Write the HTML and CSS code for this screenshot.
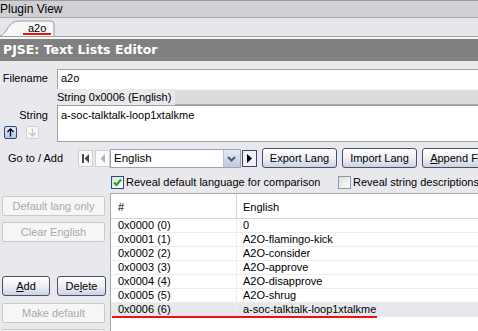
FILE: index.html
```html
<!DOCTYPE html>
<html lang="en">

<head>
    <meta charset="UTF-8">
    <title>Plugin View</title>
    <link rel="stylesheet" href="styles.css">
</head>

<body>
    <div class="window">
        <div class="pane-title">Plugin View</div>

        <div class="tabstrip">
            <div class="tab">
                <svg class="tab-shape" width="56" height="18" viewBox="0 0 56 18">
                    <path d="M0 18 C7 16 8 3 19 3 L51 3 Q54 3 54 6 L54 18" fill="#f8f8f8" stroke="#9a9a9a"/>
                </svg>
                <span class="tab-label">a2o</span>
                <span class="mark mark-tab"></span>
            </div>
        </div>

        <div class="editor-head">PJSE: Text Lists Editor</div>

        <div class="editor">
            <div class="field-row">
                <label class="side-label">Filename</label>
                <div class="textbox filename">a2o</div>
            </div>

            <div class="caption-row">
                <span class="caption">String 0x0006 (English)</span>
                <span class="caption-bar"></span>
            </div>

            <div class="string-row">
                <div class="string-side">
                    <label class="side-label">String</label>
                    <div class="arrows">
                        <span class="arrow-btn">
                            <svg width="11" height="11" viewBox="0 0 11 11"><path d="M5.5 9.5 V2 M2.5 5 L5.5 2 L8.5 5" fill="none" stroke="#000" stroke-width="1.3"/></svg>
                        </span>
                        <span class="arrow-btn disabled">
                            <svg width="11" height="11" viewBox="0 0 11 11"><path d="M5.5 1.5 V9 M2.5 6 L5.5 9 L8.5 6" fill="none" stroke="#c4c4c4" stroke-width="1.3"/></svg>
                        </span>
                    </div>
                </div>
                <div class="textbox string-box">a-soc-talktalk-loop1xtalkme</div>
            </div>

            <div class="goto-row">
                <span class="goto-label">Go to / Add</span>
                <span class="nav-btn">
                    <svg width="13" height="15" viewBox="0 0 13 15"><rect x="3" y="3" width="2" height="9" fill="#4a4a4a"/><path d="M10 3 L5.5 7.5 L10 12 Z" fill="#4a4a4a"/></svg>
                </span>
                <span class="nav-btn prev">
                    <svg width="13" height="15" viewBox="0 0 13 15"><path d="M9 3 L4.5 7.5 L9 12 Z" fill="#b4b4b4"/></svg>
                </span>
                <div class="combo">
                    <span class="combo-text">English</span>
                    <span class="combo-btn">
                        <svg width="15" height="17" viewBox="0 0 15 17"><path d="M4 7 L7.5 10.5 L11 7" fill="none" stroke="#4b5a7c" stroke-width="2"/></svg>
                    </span>
                </div>
                <span class="nav-btn next">
                    <svg width="13" height="15" viewBox="0 0 13 15"><path d="M4 3 L9 7.5 L4 12 Z" fill="#000"/></svg>
                </span>
                <button class="xp-btn lang-btn">Export Lang</button>
                <button class="xp-btn lang-btn">Import Lang</button>
                <button class="xp-btn lang-btn"><u>A</u>ppend File</button>
            </div>

            <div class="check-row">
                <span class="check on">
                    <svg width="11" height="11" viewBox="0 0 11 11"><path d="M2 5.5 L4.5 8 L9 2.5" fill="none" stroke="#21a121" stroke-width="2"/></svg>
                </span>
                <span class="check-text first">Reveal default language for comparison</span>
                <span class="check second"></span>
                <span class="check-text">Reveal string descriptions</span>
            </div>

            <div class="bottom">
                <div class="side-buttons">
                    <button class="xp-btn wide" disabled>Default lang only</button>
                    <button class="xp-btn wide" disabled>Clear English</button>
                    <div class="pair">
                        <button class="xp-btn"><u>A</u>dd</button>
                        <button class="xp-btn">De<u>l</u>ete</button>
                    </div>
                    <button class="xp-btn wide" disabled>Make default</button>
                    <button class="xp-btn wide" disabled>&nbsp;</button>
                </div>

                <div class="listview">
                    <div class="list-row list-head">
                        <span class="col-id">#</span>
                        <span class="col-text">English</span>
                    </div>
                    <div class="list-row"><span class="col-id">0x0000 (0)</span><span class="col-text">0</span></div>
                    <div class="list-row"><span class="col-id">0x0001 (1)</span><span class="col-text">A2O-flamingo-kick</span></div>
                    <div class="list-row"><span class="col-id">0x0002 (2)</span><span class="col-text">A2O-consider</span></div>
                    <div class="list-row"><span class="col-id">0x0003 (3)</span><span class="col-text">A2O-approve</span></div>
                    <div class="list-row"><span class="col-id">0x0004 (4)</span><span class="col-text">A2O-disapprove</span></div>
                    <div class="list-row"><span class="col-id">0x0005 (5)</span><span class="col-text">A2O-shrug</span></div>
                    <div class="list-row selected"><span class="col-id">0x0006 (6)</span><span class="col-text">a-soc-talktalk-loop1xtalkme</span></div>
                    <span class="mark mark-row"></span>
                </div>
            </div>
        </div>
    </div>
</body>

</html>
```

FILE: styles.css
```css
body {
    margin: 0;
    overflow: hidden;
    font-family: 'Liberation Sans', Arial, sans-serif;
    font-size: 11px;
    color: #000;
    background-color: #e9e9ed;
}

.window {
    width: 560px;
}

/* top strips */

.pane-title {
    height: 16px;
    line-height: 16px;
    font-size: 12px;
    background: #d0d0d4;
    border-top: 1px solid #9c9c9c;
    border-bottom: 1px solid #a8a8a8;
}

.tabstrip {
    height: 18px;
    background: #e6e6ea;
    border-bottom: 1px solid #a0a0a0;
}

.tab {
    position: relative;
    width: 56px;
    height: 18px;
}

.tab-shape {
    position: absolute;
    left: 0;
    top: 0;
}

.tab-label {
    position: relative;
    display: block;
    padding: 4px 0 0 28px;
    line-height: 12px;
}

.mark {
    position: absolute;
    height: 2px;
    background: #ee1111;
}

.mark-tab {
    left: 23px;
    top: 15px;
    width: 28px;
}

.editor-head {
    height: 22px;
    line-height: 22px;
    padding-left: 3px;
    border-top: 2px solid #f6f6f6;
    background: #808080;
    color: #fff;
    font-family: 'DejaVu Sans', Verdana, sans-serif;
    font-weight: bold;
    font-size: 12.5px;
}

/* editor form */

.editor {
    padding-top: 8px;
}

.field-row {
    display: flex;
    height: 20px;
}

.side-label {
    display: block;
    width: 48px;
    padding-right: 9px;
    text-align: right;
}

.field-row .side-label {
    line-height: 19px;
}

.textbox {
    flex: 1;
    background: #fff;
    border: 1px solid #a0a0a0;
    box-sizing: border-box;
    padding: 2px 3px;
}

.filename {
    border-bottom: none;
}

.caption-row {
    display: flex;
    height: 16px;
    margin-left: 57px;
    line-height: 16px;
}

.caption {
    padding-right: 4px;
}

.caption-bar {
    flex: 1;
    background: #dcdcde;
    border-top: 1px solid #f8f8f8;
    border-bottom: 1px solid #a8a8a8;
    box-sizing: border-box;
}

.string-row {
    display: flex;
    height: 37px;
}

.string-side .side-label {
    padding-top: 4px;
    line-height: 13px;
}

.arrows {
    display: flex;
    gap: 9px;
    padding: 4px 0 0 4px;
}

.arrow-btn {
    display: flex;
    align-items: center;
    justify-content: center;
    width: 13px;
    height: 13px;
    box-sizing: border-box;
    border: 1px solid #2d4b82;
    border-radius: 2px;
    background: linear-gradient(#dfe8f8, #b8c8e8);
}

.arrow-btn.disabled {
    border-color: #d2d2d2;
    background: #f6f6f6;
}

.string-box {
    line-height: 13px;
    padding-top: 3px;
}

/* go to row */

.goto-row {
    display: flex;
    align-items: center;
    height: 22px;
    margin-top: 5px;
}

.goto-label {
    width: 70px;
    padding-left: 8px;
}

.nav-btn {
    display: flex;
    align-items: center;
    justify-content: center;
    width: 15px;
    height: 17px;
    box-sizing: border-box;
    border: 1px solid #cfcfcf;
    background: #fafafa;
    margin-right: 2px;
}

.nav-btn.prev {
    margin-right: 0;
}

.nav-btn.next {
    border-color: #3a4666;
    background: #f0f0f4;
    margin: 0 5px 0 1px;
}

.combo {
    display: flex;
    width: 131px;
    height: 19px;
    box-sizing: border-box;
    border: 1px solid #9aa4b8;
    background: #fff;
}

.combo-text {
    flex: 1;
    padding-left: 3px;
    line-height: 17px;
    font-size: 11.5px;
}

.combo-btn {
    width: 16px;
    background: linear-gradient(#e4e9f4, #bfc9de);
    border-left: 1px solid #b8c0d4;
}

.xp-btn {
    font-family: 'Liberation Sans', Arial, sans-serif;
    font-size: 11px;
    height: 20px;
    padding: 0;
    color: #000;
    border: 1px solid #47506c;
    border-radius: 3px;
    background: linear-gradient(#ffffff, #ecedf2 55%, #ccd2e0);
}

.xp-btn:disabled {
    color: #a9a9a9;
    border-color: #cacaca;
    border-radius: 2px;
    background: #f6f6f6;
}

.lang-btn {
    width: 75px;
    margin-right: 5px;
    flex-shrink: 0;
}

/* checkboxes */

.check-row {
    display: flex;
    align-items: center;
    height: 18px;
    margin-top: 4px;
    padding-left: 111px;
}

.check {
    display: flex;
    align-items: center;
    justify-content: center;
    width: 13px;
    height: 13px;
    flex-shrink: 0;
    box-sizing: border-box;
    border: 1px solid #24507c;
    background: linear-gradient(135deg, #dcdcd6, #ffffff);
}

.check-text {
    padding-left: 2px;
    white-space: nowrap;
}

.check-text.first {
    width: 212px;
}

.check.second {
    border-color: #8a9cb0;
}

/* bottom area */

.bottom {
    display: grid;
    grid-template-columns: 110px 1fr;
    margin-top: 2px;
}

.side-buttons {
    display: flex;
    flex-direction: column;
    gap: 6px;
    padding: 3px 0 0 2px;
}

.wide {
    width: 103px;
}

.pair {
    display: flex;
    gap: 7px;
    margin-top: 28px;
}

.pair .xp-btn {
    width: 48px;
}

.pair .xp-btn:last-child {
    width: 49px;
}

.side-buttons .pair + .wide {
    margin-top: 1px;
}

.listview {
    position: relative;
    height: 150px;
    background: #fff;
    border-top: 1px solid #a8a8a8;
    border-left: 1px solid #a8a8a8;
}

.list-row {
    display: flex;
    height: 14px;
    line-height: 13px;
    border-bottom: 1px solid #ececec;
    box-sizing: border-box;
}

.list-head {
    height: 25px;
    line-height: 26px;
    border-bottom: 1px solid #d8d8d8;
}

.col-id {
    width: 118px;
    padding-left: 7px;
    border-right: 1px solid #ececec;
}

.list-head .col-id {
    border-right-color: #d4d4d4;
}

.col-text {
    padding-left: 6px;
}

.list-row.selected {
    background: #e8e8ec;
}

.mark-row {
    left: 1px;
    top: 122px;
    width: 265px;
}
```
